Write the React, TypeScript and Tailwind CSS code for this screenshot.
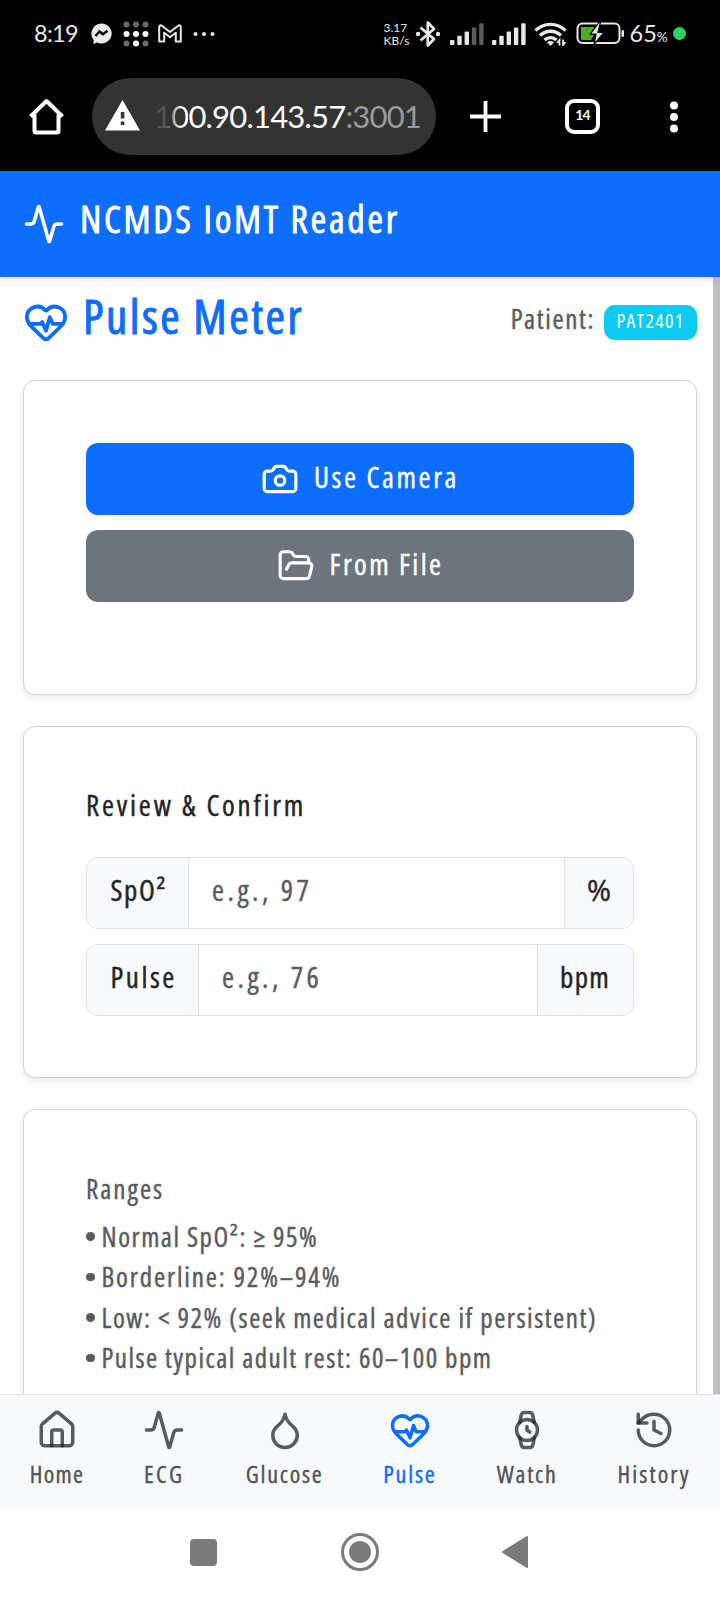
import {
  Activity,
  Camera,
  Droplet,
  FolderOpen,
  HeartPulse,
  History,
  House,
  Watch,
  type LucideIcon,
} from 'lucide-react'

type FieldProps = {
  label: string
  unit: string
  placeholder: string
  labelClass: string
  unitClass: string
}

const navItems: Array<{ label: string; icon: LucideIcon; className: string; active?: boolean }> = [
  { label: 'Home', icon: House, className: 'w-[52px] tracking-[1.3px]' },
  { label: 'ECG', icon: Activity, className: 'w-[43px] tracking-[2.4px]' },
  { label: 'Glucose', icon: Droplet, className: 'w-[78px] tracking-[1.7px]' },
  { label: 'Pulse', icon: HeartPulse, className: 'w-[53px] tracking-[1.8px]', active: true },
  { label: 'Watch', icon: Watch, className: 'w-[62px] tracking-[1.8px]' },
  { label: 'History', icon: History, className: 'w-[72px] tracking-[2.1px]' },
]

const ranges = [
  { text: 'Normal SpO²: ≥ 95%', tracking: 'tracking-[1.5px]' },
  { text: 'Borderline: 92%–94%', tracking: 'tracking-[1.85px]' },
  { text: 'Low: < 92% (seek medical advice if persistent)', tracking: 'tracking-[1.52px]' },
  { text: 'Pulse typical adult rest: 60–100 bpm', tracking: 'tracking-[1.46px]' },
]

function Signal({ level, className }: { level: number; className: string }) {
  return (
    <svg className={className} width="34" height="22" viewBox="0 0 34 22">
      {[0, 1, 2, 3, 4].map((i) => (
        <rect
          key={i}
          x={i * 7.3}
          y={17 - i * 4.2}
          width="4.4"
          height={5 + i * 4.2}
          rx="1"
          fill={i < level ? '#e8e8e8' : '#5c5c5c'}
        />
      ))}
    </svg>
  )
}

function StatusBar() {
  return (
    <div className="flex h-[67px] items-center font-['Lato',sans-serif] text-[#e8e8e8]">
      <span className="ml-[34px] w-[44px] text-[23.5px] leading-none tracking-[-0.7px]">8:19</span>
      {/* messenger */}
      <svg className="ml-[13px]" width="21" height="22" viewBox="0 0 21 22">
        <path d="M10.5 0.5a10.3 10 0 1 1-4.6 19l-3.6 1.7.5-4A10.2 10.2 0 0 1 10.5 0.5z" fill="#e8e8e8" />
        <path d="M4.5 13l4-4.5 3.5 2.8 4.5-3.5" fill="none" stroke="#000" strokeWidth="2.4" />
      </svg>
      {/* dot grid */}
      <svg className="ml-[11px]" width="26" height="26" viewBox="0 0 26 26">
        {[3.5, 13, 22.5].map((cy, row) =>
          [3.5, 13, 22.5].map((cx, col) => (
            <circle
              key={`${cx}-${cy}`}
              cx={cx}
              cy={cy}
              r="3"
              fill={row === 1 || (row === 2 && col === 1) ? '#fff' : '#6a6a6a'}
            />
          )),
        )}
      </svg>
      {/* mail */}
      <svg className="ml-[9px]" width="24" height="19" viewBox="0 0 24 19">
        <path
          d="M1.2 17.6V3.2Q1.2 1.2 3.2 1.2L12 8 20.8 1.2Q22.8 1.2 22.8 3.2V17.6H17.8V8.8L12 13.2 6.2 8.8V17.6z"
          fill="none"
          stroke="#e8e8e8"
          strokeWidth="2"
          strokeLinejoin="round"
        />
      </svg>
      <svg className="ml-[11px]" width="22" height="6" viewBox="0 0 22 6">
        <circle cx="2.5" cy="3" r="2" fill="#e8e8e8" />
        <circle cx="11" cy="3" r="2" fill="#e8e8e8" />
        <circle cx="19.5" cy="3" r="2" fill="#e8e8e8" />
      </svg>

      <div className="ml-auto w-[27px] text-[12px] leading-[13px]">
        <div>3.17</div>
        <div>KB/s</div>
      </div>
      {/* bluetooth */}
      <svg className="ml-[4px]" width="26" height="28" viewBox="0 0 26 28">
        <path
          d="M5.5 7.5L19 19l-6.2 6.5V2.5L19 9 5.5 20.5"
          fill="none"
          stroke="#e8e8e8"
          strokeWidth="2.7"
          strokeLinejoin="round"
        />
        <circle cx="3" cy="14" r="2.2" fill="#e8e8e8" />
        <circle cx="23" cy="14" r="2.2" fill="#e8e8e8" />
      </svg>
      <Signal level={3} className="ml-[9px]" />
      <Signal level={5} className="ml-[8px]" />
      {/* wifi */}
      <svg className="ml-[8px]" width="33" height="24" viewBox="0 0 33 24">
        <g fill="none" stroke="#e8e8e8" strokeWidth="3.4">
          <path d="M1.5 8.5a21.5 21.5 0 0 1 30 0" />
          <path d="M6 13.5a15 15 0 0 1 21 0" />
          <path d="M10.5 18a8.7 8.7 0 0 1 12 0" />
        </g>
        <path d="M13 20.5a5 5 0 0 1 7 0L16.5 24z" fill="#e8e8e8" />
        <path d="M25.5 23.5v-5.5l-2.5 3M29 17.5v5.5l2.5-3" fill="none" stroke="#e8e8e8" strokeWidth="1.8" />
      </svg>
      {/* battery, charging */}
      <svg className="ml-[9px]" width="49" height="23" viewBox="0 0 49 23">
        <rect x="1.5" y="1.5" width="42" height="19.5" rx="5" fill="none" stroke="#e8e8e8" strokeWidth="2" />
        <path d="M5 5h14l-5 8h4l-3 5H6.5Q5 18 5 16.5z" fill="#4fae1c" />
        <path d="M23 0.5L14.5 12h5.5L18 22.5 28 10.5h-6l2.5-10z" fill="#e8e8e8" stroke="#000" strokeWidth="1.2" />
        <rect x="45.5" y="8" width="2.5" height="7" rx="1" fill="#e8e8e8" />
      </svg>
      <div className="ml-[5px] flex w-[40px] items-baseline whitespace-nowrap leading-none">
        <span className="text-[23.5px]">65</span>
        <span className="text-[13.5px]">%</span>
      </div>
      <span className="mr-[34.5px] ml-[3px] size-[13px] shrink-0 rounded-full bg-[#30d060]" />
    </div>
  )
}

function BrowserBar() {
  return (
    <div className="flex h-[99px] items-center font-['Lato',sans-serif]">
      <svg className="ml-[28px]" width="37" height="37" viewBox="0 0 37 37">
        <path
          d="M2.5 18.5L18.5 3 34.5 18.5M6.5 16.5v16.5Q6.5 34.5 8 34.5h21Q30.5 34.5 30.5 33V16.5"
          fill="none"
          stroke="#fff"
          strokeWidth="4"
          strokeLinejoin="round"
        />
      </svg>
      <div className="ml-[27px] flex h-[77px] w-[344px] items-center overflow-hidden rounded-full bg-[#333333]">
        <svg className="mb-[3px] ml-[13px] shrink-0" width="35" height="31" viewBox="0 0 35 31">
          <path d="M17.5 0L35 30.5H0z" fill="#fff" />
          <path d="M15.8 12h3.6v6.5h-3.6zM15.8 21.5h3.6v3.6h-3.6z" fill="#333" />
        </svg>
        <div className="ml-[14px] text-[31px] leading-none tracking-[-0.8px] whitespace-nowrap text-white">
          <span className="bg-gradient-to-r from-[#555] from-35% to-white to-80% bg-clip-text text-transparent">10</span>
          0.90.143.57<span className="text-[#9a9a9a]">:3001</span>
        </div>
      </div>
      <svg className="ml-[34px]" width="31" height="31" viewBox="0 0 31 31">
        <path d="M15.5 0v31M0 15.5h31" stroke="#fff" strokeWidth="3.8" />
      </svg>
      <div className="ml-[64px] flex size-[35px] items-center justify-center rounded-[9px] border-4 border-white pb-[3px] text-[14px] font-bold leading-none tracking-[-0.8px] text-white">
        14
      </div>
      <svg className="ml-[70px]" width="8" height="32" viewBox="0 0 8 32">
        <circle cx="4" cy="4.5" r="4" fill="#fff" />
        <circle cx="4" cy="16" r="4" fill="#fff" />
        <circle cx="4" cy="27.5" r="4" fill="#fff" />
      </svg>
    </div>
  )
}

function Field({ label, unit, placeholder, labelClass, unitClass }: FieldProps) {
  return (
    <div className="flex h-[72px] overflow-hidden rounded-[12px] border-[1.5px] border-[#dee2e6] text-[29px] leading-none">
      <span className={`flex shrink-0 items-center border-r-[1.5px] border-[#dee2e6] bg-[#f8f9fc] pb-2 pl-[23.5px] ${labelClass}`}>
        {label}
      </span>
      <input
        className="min-w-0 flex-1 bg-white px-[23px] pb-2 tracking-[3.5px] placeholder:text-[#595c5f] placeholder:opacity-100"
        placeholder={placeholder}
      />
      <span className={`flex shrink-0 items-center border-l-[1.5px] border-[#dee2e6] bg-[#f8f9fc] pb-2 pl-[22px] ${unitClass}`}>
        {unit}
      </span>
    </div>
  )
}

function BottomNav() {
  return (
    <nav className="flex h-[115px] justify-between border-t-[1.5px] border-[#dee2e6] bg-[#f8f9fc] pt-[14px] pr-[30px] pl-[31px]">
      {navItems.map(({ label, icon: Icon, className, active }) => (
        <a
          key={label}
          className={`flex flex-col items-center ${className} ${active ? 'text-[#0d6efd]' : 'text-[#212529]/75'}`}
        >
          <Icon size={42} strokeWidth={2} className="shrink-0" />
          <span className="mt-[11px] text-[24px] leading-none whitespace-nowrap">{label}</span>
        </a>
      ))}
    </nav>
  )
}

export default function App() {
  const card =
    'rounded-[12px] border-[1.5px] border-[#d2d3d4] bg-white pl-[62px] pr-[62px] shadow-[0_3px_6px_rgba(0,0,0,0.08)]'

  return (
    <div className="flex h-[1600px] w-[720px] flex-col overflow-hidden bg-[#fefefe] text-[#212529]">
      <div className="h-[171px] shrink-0 bg-black">
        <StatusBar />
        <BrowserBar />
      </div>

      <div className="font-['Open_Sans',sans-serif] font-medium [-webkit-text-stroke:0.4px] [font-stretch:80%]">
        <header className="relative z-10 flex h-[106px] items-center bg-[#0d6efd] pl-[23px] text-white shadow-[0_3px_6px_rgba(0,0,0,0.08)]">
          <Activity size={42} />
          <span className="ml-[15px] pb-[12px] text-[38px] leading-none tracking-[2.7px] [-webkit-text-stroke:0.8px]">
            NCMDS IoMT Reader
          </span>
        </header>

        <div className="flex h-[1117px] overflow-hidden">
          <main className="w-[713px] pr-4 pl-[23px]">
            <div className="mt-[22px] flex h-[46px] items-center">
              <HeartPulse size={46} className="shrink-0 text-[#0d6efd]" />
              <h1 className="ml-[14px] pb-[11px] text-[47px] leading-none tracking-[2.5px] text-[#0d6efd] [-webkit-text-stroke:1px]">
                Pulse Meter
              </h1>
              <span className="ml-auto pb-[8px] text-[27px] leading-none tracking-[1.6px] text-[#595c5f]">Patient:</span>
              <span className="ml-[9px] flex h-[35px] w-[93px] items-center justify-center rounded-[11px] bg-[#0dcaf0] pb-0.5 text-[20px] leading-none tracking-[1.3px] text-white [-webkit-text-stroke:0]">
                PAT2401
              </span>
            </div>

            <section className={`mt-[35px] h-[315px] pt-[62px] ${card}`}>
              <button className="flex h-[72px] w-full items-center justify-center gap-[15px] rounded-[12px] bg-[#0d6efd] text-white">
                <Camera size={38} />
                <span className="pb-[6px] text-[29px] leading-none tracking-[2.6px]">Use Camera</span>
              </button>
              <button className="mt-[15px] flex h-[72px] w-full items-center justify-center gap-[15px] rounded-[12px] bg-[#6c757d] text-white">
                <FolderOpen size={38} />
                <span className="pb-[6px] text-[29px] leading-none tracking-[2.4px]">From File</span>
              </button>
            </section>

            <section className={`mt-[31px] h-[352px] pt-[61px] ${card}`}>
              <h2 className="h-8 text-[29px] leading-[34px] tracking-[2.8px]">Review &amp; Confirm</h2>
              <div className="mt-[37px] flex flex-col gap-[15px]">
                <Field
                  label="SpO²"
                  unit="%"
                  placeholder="e.g., 97"
                  labelClass="w-[102px] tracking-[1.7px]"
                  unitClass="w-[69px] [font-stretch:90%]"
                />
                <Field
                  label="Pulse"
                  unit="bpm"
                  placeholder="e.g., 76"
                  labelClass="w-[112px] tracking-[2.6px]"
                  unitClass="w-[96px] tracking-[1.4px]"
                />
              </div>
            </section>

            <section className={`mt-[31px] h-[352px] pt-[60px] text-[#595c5f] ${card}`}>
              <h3 className="h-9 text-[27px] leading-[38px] tracking-[2px]">Ranges</h3>
              <ul className="mt-[10px] text-[27px]">
                {ranges.map(({ text, tracking }) => (
                  <li key={text} className="flex h-[40.5px] items-center whitespace-nowrap leading-none">
                    <span className="mr-[7px] size-[8.5px] rounded-full bg-[#595c5f]" />
                    <span className={tracking}>{text}</span>
                  </li>
                ))}
              </ul>
            </section>
          </main>
          <div className="w-[7px] bg-[#c0c0c0]" />
        </div>

        <BottomNav />
      </div>

      <div className="flex h-[91px] items-center bg-white pb-[5px]">
        <span className="ml-[190px] size-[27px] rounded-[4px] bg-[#7b7b7b]" />
        <span className="ml-[124px] flex size-[38px] items-center justify-center rounded-full border-[3px] border-[#7b7b7b]">
          <span className="size-[22px] rounded-full bg-[#7b7b7b]" />
        </span>
        <svg className="ml-[123px]" width="26" height="32" viewBox="0 0 26 32">
          <path d="M1 16L25 1V31z" fill="#7b7b7b" stroke="#7b7b7b" strokeWidth="2" strokeLinejoin="round" />
        </svg>
      </div>
    </div>
  )
}
